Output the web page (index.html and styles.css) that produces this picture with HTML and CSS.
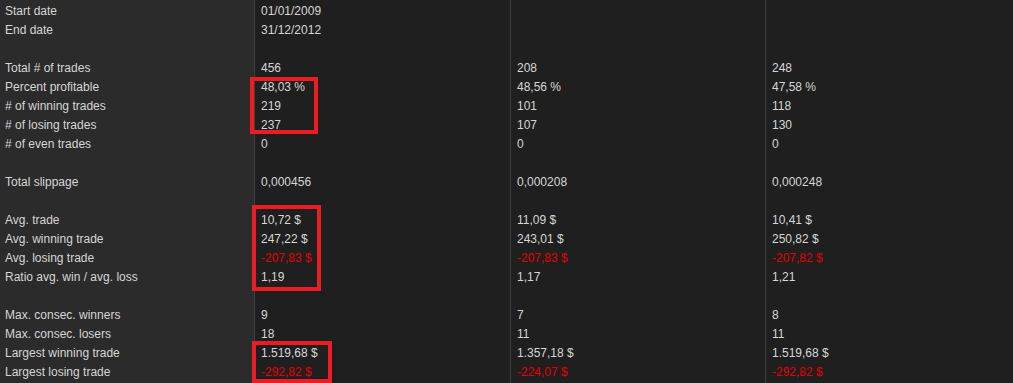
FILE: index.html
```html
<!DOCTYPE html>
<html>
<head>
<meta charset="utf-8">
<link rel="stylesheet" href="styles.css">
</head>
<body>
<div class="report">
  <div class="col labels">
    <div class="cell">Start date</div>
    <div class="cell">End date</div>
    <div class="cell"></div>
    <div class="cell">Total # of trades</div>
    <div class="cell">Percent profitable</div>
    <div class="cell"># of winning trades</div>
    <div class="cell"># of losing trades</div>
    <div class="cell"># of even trades</div>
    <div class="cell"></div>
    <div class="cell">Total slippage</div>
    <div class="cell"></div>
    <div class="cell">Avg. trade</div>
    <div class="cell">Avg. winning trade</div>
    <div class="cell">Avg. losing trade</div>
    <div class="cell">Ratio avg. win / avg. loss</div>
    <div class="cell"></div>
    <div class="cell">Max. consec. winners</div>
    <div class="cell">Max. consec. losers</div>
    <div class="cell">Largest winning trade</div>
    <div class="cell">Largest losing trade</div>
  </div>
  <div class="col values c1">
    <div class="cell">01/01/2009</div>
    <div class="cell">31/12/2012</div>
    <div class="cell"></div>
    <div class="cell">456</div>
    <div class="cell">48,03 %</div>
    <div class="cell">219</div>
    <div class="cell">237</div>
    <div class="cell">0</div>
    <div class="cell"></div>
    <div class="cell">0,000456</div>
    <div class="cell"></div>
    <div class="cell">10,72 $</div>
    <div class="cell">247,22 $</div>
    <div class="cell neg">-207,83 $</div>
    <div class="cell">1,19</div>
    <div class="cell"></div>
    <div class="cell">9</div>
    <div class="cell">18</div>
    <div class="cell">1.519,68 $</div>
    <div class="cell neg">-292,82 $</div>
  </div>
  <div class="col values c2">
    <div class="cell"></div>
    <div class="cell"></div>
    <div class="cell"></div>
    <div class="cell">208</div>
    <div class="cell">48,56 %</div>
    <div class="cell">101</div>
    <div class="cell">107</div>
    <div class="cell">0</div>
    <div class="cell"></div>
    <div class="cell">0,000208</div>
    <div class="cell"></div>
    <div class="cell">11,09 $</div>
    <div class="cell">243,01 $</div>
    <div class="cell neg">-207,83 $</div>
    <div class="cell">1,17</div>
    <div class="cell"></div>
    <div class="cell">7</div>
    <div class="cell">11</div>
    <div class="cell">1.357,18 $</div>
    <div class="cell neg">-224,07 $</div>
  </div>
  <div class="col values c3">
    <div class="cell"></div>
    <div class="cell"></div>
    <div class="cell"></div>
    <div class="cell">248</div>
    <div class="cell">47,58 %</div>
    <div class="cell">118</div>
    <div class="cell">130</div>
    <div class="cell">0</div>
    <div class="cell"></div>
    <div class="cell">0,000248</div>
    <div class="cell"></div>
    <div class="cell">10,41 $</div>
    <div class="cell">250,82 $</div>
    <div class="cell neg">-207,82 $</div>
    <div class="cell">1,21</div>
    <div class="cell"></div>
    <div class="cell">8</div>
    <div class="cell">11</div>
    <div class="cell">1.519,68 $</div>
    <div class="cell neg">-292,82 $</div>
  </div>
  <div class="mark mark-trades"></div>
  <div class="mark mark-avg"></div>
  <div class="mark mark-largest"></div>
</div>
</body>
</html>
```

FILE: styles.css
```css
html, body {
  margin: 0;
  padding: 0;
  background: #1f1f1f;
  overflow: hidden;
}

.report {
  position: relative;
  display: flex;
  width: 1013px;
  height: 383px;
  font-family: "Liberation Sans", Arial, sans-serif;
  font-size: 12px;
  color: #d6d6d6;
}

.col {
  display: flex;
  flex-direction: column;
  padding-top: 2px;
}

.cell {
  height: 19px;
  line-height: 19px;
  white-space: nowrap;
}

.labels {
  width: 254px;
  background: #2b2b2b;
  padding-left: 5px;
  box-sizing: border-box;
}

.values {
  background: #1f1f1f;
  border-left: 1px solid #3e3e3e;
  padding-left: 6px;
  box-sizing: border-box;
}

.c1 { width: 256px; }
.c2 { width: 255px; }
.c3 { flex: 1; }

.neg {
  color: #e50000;
}

.mark {
  position: absolute;
  border: 4px solid #ed1c24;
  box-sizing: border-box;
}

.mark-trades {
  left: 250px;
  top: 77px;
  width: 68px;
  height: 57px;
}

.mark-avg {
  left: 252px;
  top: 205px;
  width: 69px;
  height: 86px;
}

.mark-largest {
  left: 252px;
  top: 341px;
  width: 80px;
  height: 42px;
}
```
